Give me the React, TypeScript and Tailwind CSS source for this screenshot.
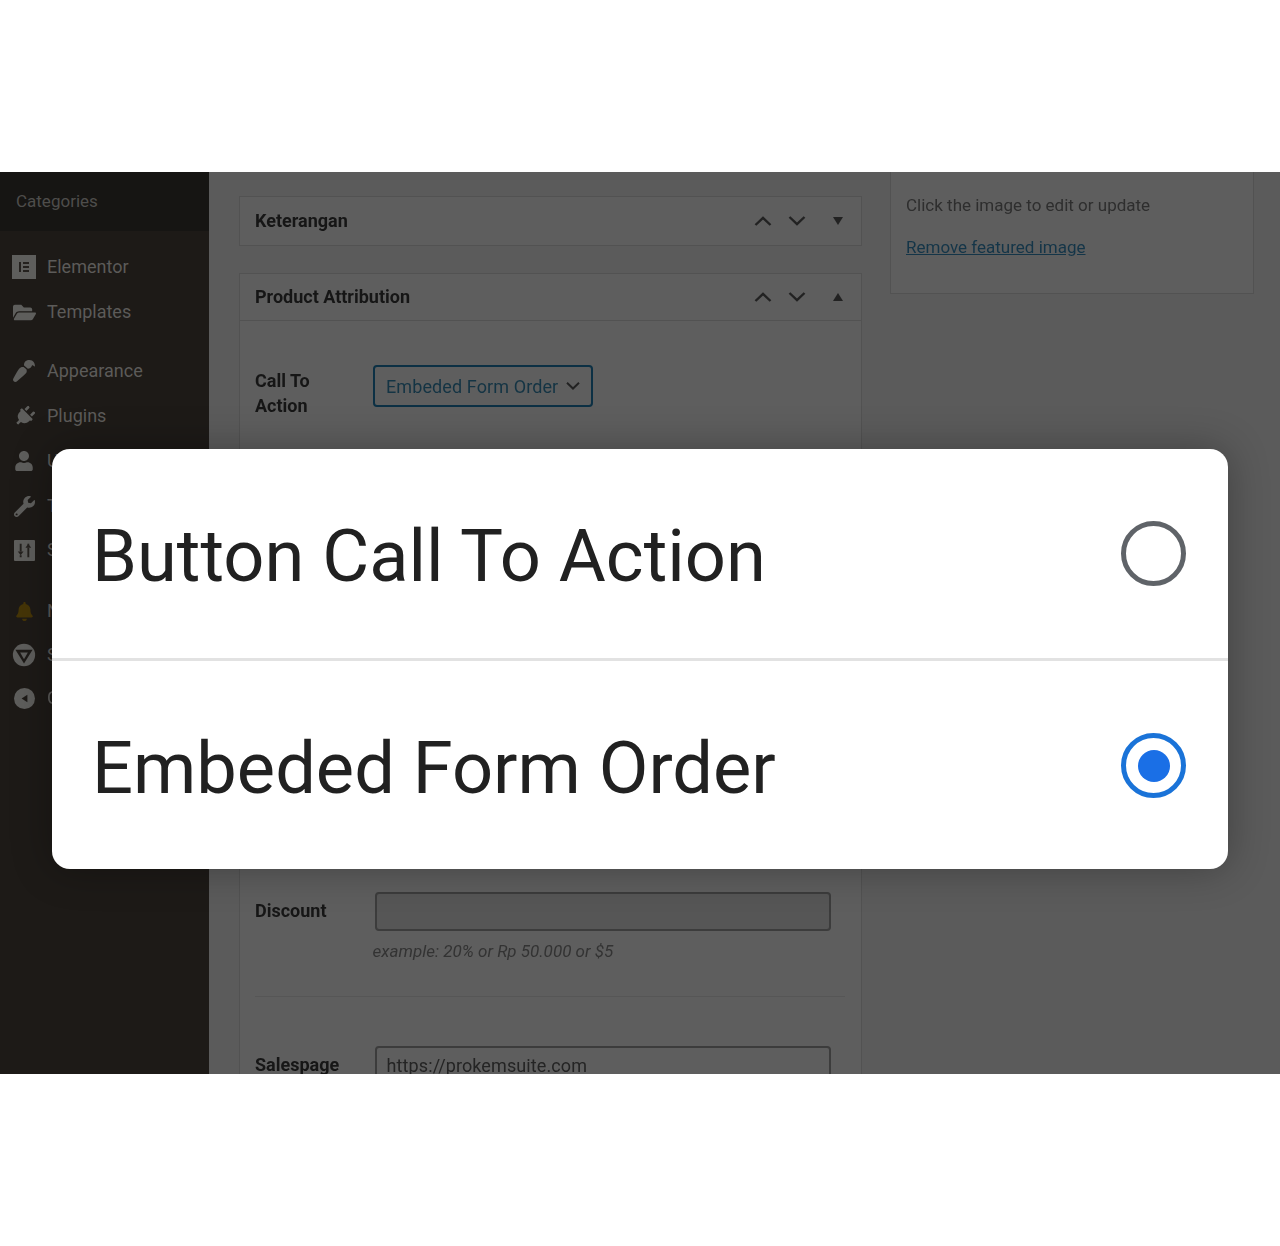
import React from "react";
import { FaBell, FaFolderOpen, FaPaintBrush, FaPlug, FaUser, FaWrench } from "react-icons/fa";

const ICON = "#5e5e5c";

const ElementorIcon = () => (
  <svg viewBox="0 0 24 24" className="w-6 h-6">
    <rect width="24" height="24" fill={ICON} />
    <path d="M7 7h2v10H7zM11 7h6v2h-6zM11 11h6v2h-6zM11 15h6v2h-6z" fill="#24211e" />
  </svg>
);

const SlidersIcon = () => (
  <svg viewBox="0 0 22 22" className="w-[21px] h-[21px]">
    <rect width="22" height="22" rx="1" fill={ICON} />
    <path d="M7 4v8M7 16v2M15 8v10M15 4v1" stroke="#24211e" strokeWidth="2" />
    <path d="M4 12h6l-3 4zM12 8h6l-3-4z" fill="#24211e" />
  </svg>
);

const ShieldIcon = () => (
  <svg viewBox="0 0 28 28" className="w-[26px] h-[26px]">
    <circle cx="14" cy="14" r="13" fill={ICON} />
    <path d="M4 8h20L14 24z" fill="#1d1a17" />
    <path d="M9.5 11h9L14 19z" fill={ICON} />
  </svg>
);

const CollapseIcon = () => (
  <svg viewBox="0 0 22 22" className="w-[21px] h-[21px]">
    <circle cx="11" cy="11" r="11" fill={ICON} />
    <path d="M14 7v8L8 11z" fill="#1d1a17" />
  </svg>
);

const Chevron = ({ up, className }: { up?: boolean; className?: string }) => (
  <svg viewBox="0 0 18 10" className={`w-[18px] h-[10px] ${className ?? ""}`}>
    <path
      d={up ? "M1.5 9L9 1.8 16.5 9" : "M1.5 1L9 8.2 16.5 1"}
      fill="none"
      stroke="#222222"
      strokeWidth="2.4"
    />
  </svg>
);

interface MenuItemProps {
  icon: React.ReactNode;
  label: string;
  className: string;
}

const MenuItem: React.FC<MenuItemProps> = ({ icon, label, className }) => (
  <div className={`flex items-center h-6 pl-3 ${className}`}>
    <div className="w-6 flex justify-center shrink-0">{icon}</div>
    <span className="ml-[11px] pb-[2px] text-[18px] text-[#5c5b59]">{label}</span>
  </div>
);

const Sidebar = () => (
  <div className="w-[209px] shrink-0 bg-[#1d1a17]">
    <div className="h-[59px] bg-[#161513] pl-4 pt-[18px] text-[17px] leading-[22px] text-[#4e4d4b]">
      Categories
    </div>
    <MenuItem className="mt-[24px]" icon={<ElementorIcon />} label="Elementor" />
    <MenuItem className="mt-[21px]" icon={<FaFolderOpen size={23} color={ICON} />} label="Templates" />
    <MenuItem className="mt-[35px]" icon={<FaPaintBrush size={22} color={ICON} className="rotate-180" />} label="Appearance" />
    <MenuItem className="mt-[21px]" icon={<FaPlug size={21} color={ICON} className="rotate-45" />} label="Plugins" />
    <MenuItem className="mt-[21px]" icon={<FaUser size={20} color={ICON} />} label="Users" />
    <MenuItem className="mt-[21px]" icon={<FaWrench size={21} color={ICON} />} label="Tools" />
    <MenuItem className="mt-[20px]" icon={<SlidersIcon />} label="Settings" />
    <MenuItem className="mt-[37px]" icon={<FaBell size={19} color="#453507" />} label="Notifications" />
    <MenuItem className="mt-[20px]" icon={<ShieldIcon />} label="Security" />
    <MenuItem className="mt-[19px]" icon={<CollapseIcon />} label="Collapse" />
  </div>
);

const PanelHeader = ({ title, open }: { title: string; open: boolean }) => (
  <div className={`${open ? "h-[46px]" : "h-12"} flex items-center pl-[15px] pr-[18px] text-[#161616]`}>
    <span className="pb-[2px] text-[18px] font-bold flex-1">{title}</span>
    <Chevron up />
    <Chevron className="ml-[16px]" />
    <div
      className={`ml-[27px] w-0 h-0 border-l-[5px] border-r-[5px] border-l-transparent border-r-transparent ${
        open ? "border-b-[8px] border-b-[#222222]" : "border-t-[8px] border-t-[#222222]"
      }`}
    />
  </div>
);

const Screen = () => (
  <div className="flex h-[902px] bg-[#5b5b5b] blur-[0.7px]">
    <Sidebar />
    <div className="w-[623px] ml-[30px] shrink-0 pt-6">
      <div className="border border-[#525252] bg-[#5e5e5e]">
        <PanelHeader title="Keterangan" open={false} />
      </div>
      <div className="mt-[27px] border border-[#525252] bg-[#5e5e5e] h-[900px]">
        <PanelHeader title="Product Attribution" open={true} />
        <div className="border-t border-[#525252] pl-[15px] pr-[30px]">
          <div className="flex pt-[47px]">
            <div className="w-[118px] text-[18px] leading-[25px] font-bold text-[#161616]">
              Call To
              <br />
              Action
            </div>
            <div className="-mt-[3px] w-[220px] h-[42px] rounded-[4px] border-2 border-[#0c3044] flex items-center justify-between pl-[11px] pr-[9px] text-[18px] tracking-[0.1px] text-[#143444]">
              <span>Embeded Form Order</span>
              <Chevron className="scale-[0.8]" />
            </div>
          </div>
          <div className="h-[474px]" />
          <div className="flex">
            <div className="w-[120px] text-[18px] leading-[38px] font-bold text-[#161616]">Discount</div>
            <div className="w-[458px]">
              <div className="h-[39px] rounded-[4px] border-2 border-[#3c3c3c] bg-[#565656]" />
              <div className="-ml-[2px] mt-[8px] text-[17px] leading-[24px] italic text-[#333333]">
                example: 20% or Rp 50.000 or $5
              </div>
            </div>
          </div>
          <div className="mt-[33px] h-px bg-[#565656] w-[590px]" />
          <div className="flex mt-[49px]">
            <div className="w-[120px] text-[18px] leading-[38px] font-bold text-[#161616]">Salespage</div>
            <div className="w-[458px] h-[39px] rounded-[4px] border-2 border-[#3c3c3c] bg-[#5e5e5e] pl-[10px] pt-[4px] text-[18px] tracking-[0.1px] text-[#242424]">
              https://prokemsuite.com
            </div>
          </div>
        </div>
      </div>
    </div>
    <div className="w-[364px] ml-[28px] shrink-0">
      <div className="h-[122px] border border-t-0 border-[#525252] bg-[#5e5e5e] px-[15px] pt-[21px] text-[17px]">
        <div className="leading-6 text-[#2e2e2e]">Click the image to edit or update</div>
        <div className="mt-[18px] leading-6 text-[#143548] underline">Remove featured image</div>
      </div>
    </div>
  </div>
);

const Radio = ({ selected }: { selected: boolean }) => (
  <div
    className={`w-[65px] h-[65px] rounded-full border-[5px] flex items-center justify-center ${
      selected ? "border-[#1a73d8]" : "border-[#5f6368]"
    }`}
  >
    {selected && <div className="w-8 h-8 rounded-full bg-[#1a6fe6]" />}
  </div>
);

const Option = ({ label, selected }: { label: string; selected: boolean }) => (
  <div className="h-[209px] flex items-center justify-between pl-10 pr-[42px]">
    <span className="pt-2 text-[72.2px] text-[#212121]">{label}</span>
    <Radio selected={selected} />
  </div>
);

export default function App() {
  return (
    <div className="w-[1280px] h-[1246px] bg-white py-[172px] font-['Roboto',sans-serif]">
      <div className="relative h-[902px] overflow-hidden">
        <Screen />
        <div className="absolute left-[52px] top-[277px] w-[1176px] h-[420px] rounded-[18px] bg-white shadow-[0_0_40px_rgba(0,0,0,0.3)]">
          <Option label="Button Call To Action" selected={false} />
          <div className="h-[3px] bg-[#e2e2e2]" />
          <Option label="Embeded Form Order" selected={true} />
        </div>
      </div>
    </div>
  );
}
